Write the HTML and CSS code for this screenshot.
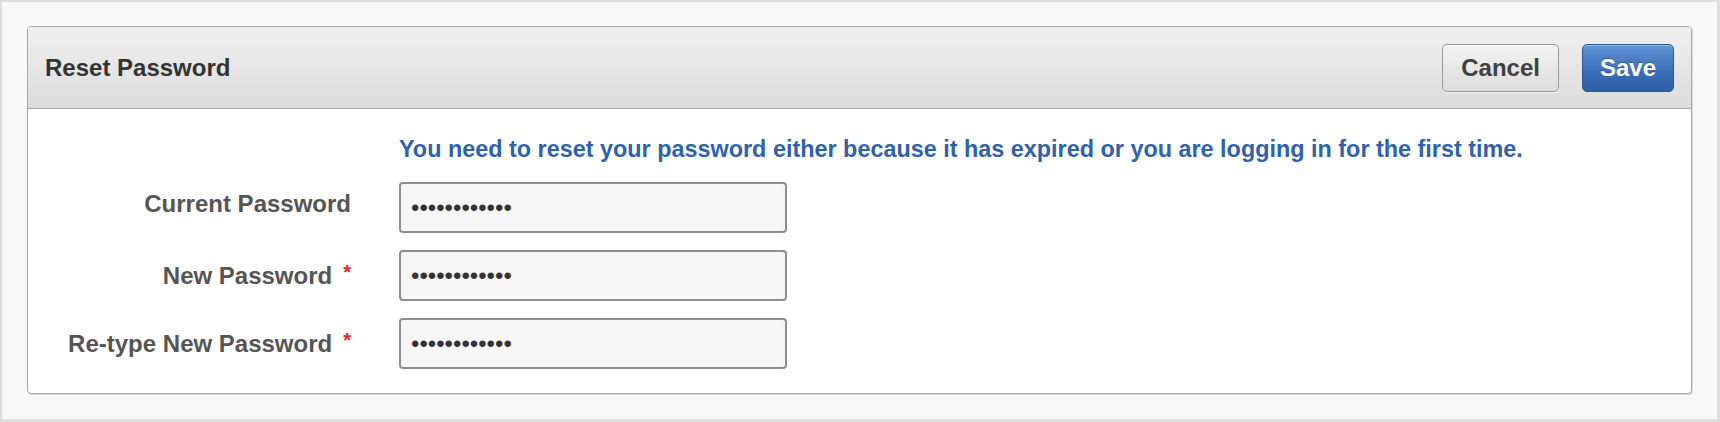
FILE: index.html
```html
<!DOCTYPE html>
<html lang="en">
<head>
<meta charset="utf-8">
<title>Reset Password</title>
<link rel="stylesheet" href="styles.css">
</head>
<body>
<div class="page">
  <form class="panel" onsubmit="return false">
    <div class="panel-header">
      <h1 class="panel-title">Reset Password</h1>
      <div class="actions">
        <button type="button" class="btn btn-default">Cancel</button>
        <button type="submit" class="btn btn-primary">Save</button>
      </div>
    </div>
    <div class="panel-body">
      <div class="form-grid">
        <div class="spacer"></div>
        <p class="message">You need to reset your password either because it has expired or you are logging in for the first time.</p>

        <label class="field-label" for="cur">Current Password</label>
        <input class="field-input" id="cur" type="password" value="............">

        <label class="field-label" for="new">New Password<span class="req">*</span></label>
        <input class="field-input" id="new" type="password" value="............">

        <label class="field-label" for="re">Re-type New Password<span class="req">*</span></label>
        <input class="field-input" id="re" type="password" value="............">
      </div>
    </div>
  </form>
</div>
</body>
</html>
```

FILE: styles.css
```css
* { box-sizing: border-box; }

html, body {
  margin: 0;
  padding: 0;
  height: 100%;
}

body {
  font-family: "Liberation Sans", Arial, Helvetica, sans-serif;
  background: #f8f8f8;
}

.page {
  height: 422px;
  border: 2px solid #dedede;
  border-right-width: 3px;
  border-bottom-width: 3px;
  background: #f8f8f8;
  padding: 24px 25px 24px 25px;
}

.panel {
  margin: 0;
  background: #fff;
  border: 1px solid #a9a9a9;
  border-radius: 4px;
  box-shadow: 1px 1px 1px rgba(0,0,0,0.12);
  overflow: hidden;
}

.panel-header {
  height: 82px;
  display: flex;
  align-items: center;
  justify-content: space-between;
  padding: 0 17px 0 17px;
  background: linear-gradient(#f0f0f0, #dcdcdc);
  border-bottom: 1px solid #a9a9a9;
}

.panel-title {
  margin: 0;
  font-size: 24px;
  font-weight: bold;
  color: #333;
  line-height: 28px;
}

.actions {
  display: flex;
  gap: 23px;
}

.btn {
  height: 48px;
  padding: 0 17px;
  border-radius: 5px;
  font-family: inherit;
  font-size: 24px;
  font-weight: bold;
  line-height: 44px;
  cursor: pointer;
}

.btn-default {
  color: #404040;
  background: linear-gradient(#f4f4f4, #dcdcdc);
  border: 1px solid #9a9a9a;
  box-shadow: inset 0 1px 0 #fff, 0 1px 0 rgba(255,255,255,0.6);
  padding: 0 18px;
}

.btn-primary {
  color: #fff;
  background: linear-gradient(#5f93d4, #3a6db6 60%, #2f5fa6);
  border: 1px solid #2b5595;
  box-shadow: inset 0 1px 0 rgba(255,255,255,0.35);
  text-shadow: 0 -1px 0 rgba(0,0,0,0.3);
}

.panel-body {
  padding: 26px 0 24px 0;
}

.form-grid {
  display: grid;
  grid-template-columns: 323px 388px;
  column-gap: 48px;
  row-gap: 17px;
  align-items: start;
}

.message {
  margin: 0 0 2px 0;
  font-size: 23.4px;
  font-weight: bold;
  color: #2f62aa;
  line-height: 28px;
  white-space: nowrap;
}

.field-label {
  justify-self: end;
  padding-top: 8px;
  font-size: 24px;
  font-weight: bold;
  color: #555;
  line-height: 28px;
  white-space: nowrap;
}

.req {
  color: #f02020;
  font-size: 20px;
  vertical-align: 5px;
  margin-left: 11px;
}

.field-input {
  width: 388px;
  height: 51px;
  margin: 0;
  padding: 0 10px;
  border: 2px solid #8e8e8e;
  border-radius: 4px;
  background: #f7f7f7;
  font-family: "Liberation Sans", Arial, sans-serif;
  font-size: 24px;
  color: #333;
  outline: none;
}
```
